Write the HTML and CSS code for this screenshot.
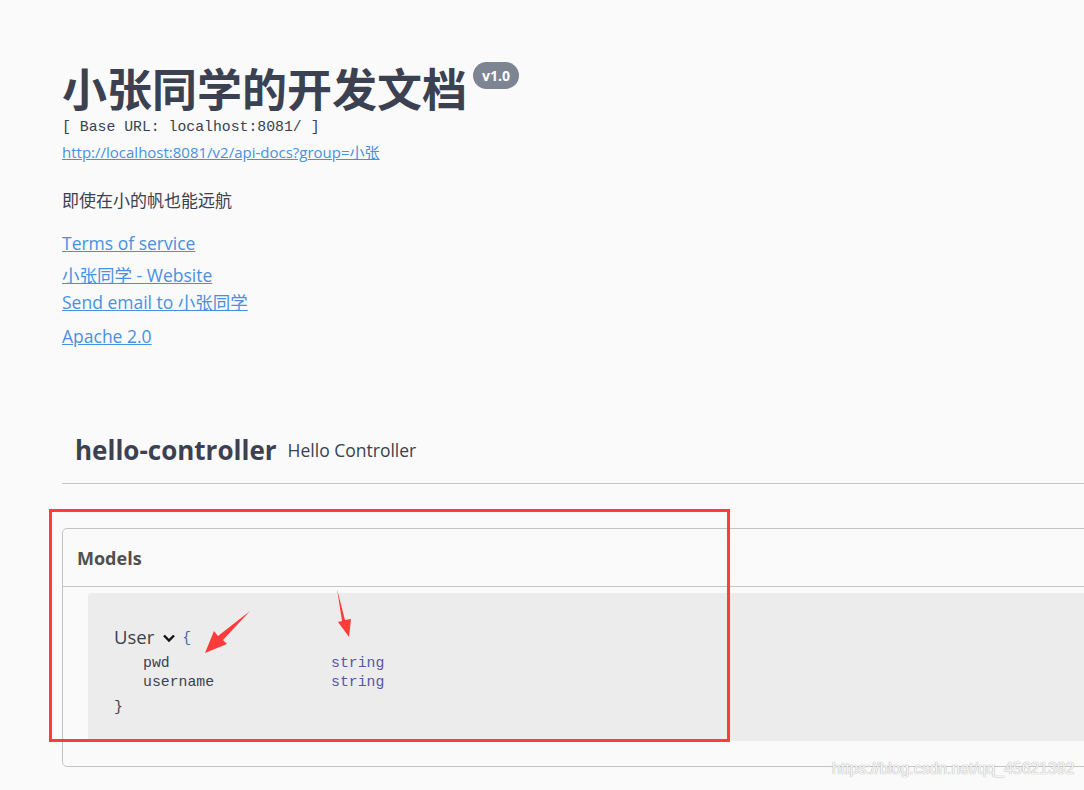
FILE: index.html
```html
<!DOCTYPE html>
<html lang="zh">
<head>
  <meta charset="UTF-8" />
  <title>小张同学的开发文档</title>
  <link rel="stylesheet" href="styles.css">
</head>
<body>
  <div class="wrapper">
    <div class="info">
      <div class="title-row">
        <h2 class="title">小张同学的开发文档</h2>
        <span class="version">v1.0</span>
      </div>
      <pre class="base-url">[ Base URL: localhost:8081/ ]</pre>
      <a class="url" href="#">http://localhost:8081/v2/api-docs?group=小张</a>
      <p class="desc">即使在小的帆也能远航</p>
      <a class="info-link terms" href="#">Terms of service</a>
      <a class="info-link website" href="#">小张同学 - Website</a>
      <a class="info-link email" href="#">Send email to 小张同学</a>
      <a class="info-link license" href="#">Apache 2.0</a>
    </div>

    <div class="tag-section">
      <h3 class="tag-header">
        <span class="tag-name">hello-controller</span>
        <span class="tag-desc">Hello Controller</span>
      </h3>
    </div>

    <section class="models">
      <h4 class="models-title">Models</h4>
      <div class="model-box">
        <div class="model-head">
          <span class="model-name">User</span>
          <svg class="chevron" width="14" height="10" viewBox="0 0 14 10"><path d="M2 2.5 L7 7.5 L12 2.5" fill="none" stroke="#111" stroke-width="2.4"/></svg>
          <span class="brace-open">{</span>
        </div>
        <div class="props">
          <div class="prop"><span class="prop-name">pwd</span><span class="prop-type">string</span></div>
          <div class="prop"><span class="prop-name">username</span><span class="prop-type">string</span></div>
        </div>
        <div class="brace-close">}</div>
      </div>
    </section>
  </div>

  <!-- annotations drawn on top of the screenshot -->
  <div class="mark-box"></div>
  <svg class="arrows" width="1084" height="790" viewBox="0 0 1084 790">
    <polygon points="250,611 223,640 227,644 205,653 214,631 218,636" fill="#ff3b3b"/>
    <polygon points="337,589 345,620 351,619 349,637 338,622 342,621" fill="#ff3b3b"/>
  </svg>
  <div class="watermark">https://blog.csdn.net/qq_45621392</div>
</body>
</html>
```

FILE: styles.css
```css
body {
  margin: 0;
  background-color: #fafafa;
  color: #3b4151;
  font-family: "Open Sans", "Noto Sans CJK SC", sans-serif;
  overflow: hidden;
  width: 1084px;
  height: 790px;
  position: relative;
}
.wrapper {
  width: 1300px;
  padding-left: 62px;
  box-sizing: border-box;
}
.info {
  display: flex;
  flex-direction: column;
  align-items: flex-start;
}
.title-row {
  display: flex;
  align-items: flex-start;
  margin-top: 62px;
}
.title {
  margin: 0;
  font-family: "Noto Sans CJK SC", sans-serif;
  font-size: 45px;
  line-height: 52px;
  font-weight: 700;
  color: #3b4151;
}
.version {
  margin-left: 6px;
  height: 27px;
  line-height: 27px;
  padding: 0 9px;
  border-radius: 14px;
  background-color: #7d8492;
  color: white;
  font-family: "Open Sans", sans-serif;
  font-weight: 700;
  font-size: 14px;
}
.base-url {
  margin: 3px 0 0;
  font-family: "Liberation Mono", monospace;
  font-size: 14.8px;
  line-height: 20px;
  color: #3b4151;
}
.url {
  margin-top: 5px;
  font-size: 15px;
  line-height: 20px;
  color: #4990e2;
}
.desc {
  margin: 27px 0 0;
  font-size: 17px;
  line-height: 24px;
}
.info-link {
  font-size: 17.5px;
  line-height: 24px;
  color: #4990e2;
}
.terms { margin-top: 18px; }
.website { margin-top: 8px; }
.email { margin-top: 3px; }
.license { margin-top: 10px; }

.tag-section {
  margin-top: 82px;
}
.tag-header {
  margin: 0;
  display: flex;
  align-items: center;
  height: 40px;
  padding: 0 0 13px 13px;
  border-bottom: 1px solid #c4c6ca;
}
.tag-name {
  font-size: 26px;
  font-weight: 700;
}
.tag-desc {
  margin-left: 11px;
  font-size: 17.5px;
  font-weight: 400;
}

.models {
  margin-top: 44px;
  border: 1px solid #c4c4c4;
  border-radius: 5px;
  padding-bottom: 25px;
}
.models-title {
  margin: 0;
  height: 57px;
  line-height: 58px;
  padding-left: 14px;
  font-size: 18px;
  font-weight: 700;
  color: #505050;
  border-bottom: 1px solid #c4c4c4;
}
.model-box {
  margin: 6px 0 0 25px;
  height: 148px;
  background-color: #ececec;
  border-radius: 4px;
  padding: 30px 0 0 26px;
  box-sizing: border-box;
}
.model-head {
  display: flex;
  align-items: center;
  height: 26px;
}
.model-name {
  font-size: 18.5px;
  color: #3b4151;
}
.chevron {
  margin: 3px 0 0 8px;
}
.brace-open {
  margin-left: 6px;
  font-family: "Liberation Mono", monospace;
  font-size: 14.8px;
  color: #4a6a9a;
  padding-top: 3px;
}
.props {
  margin-top: 5px;
}
.prop {
  display: flex;
  padding-left: 29px;
  height: 19px;
  line-height: 19px;
  font-family: "Liberation Mono", monospace;
  font-size: 14.8px;
}
.prop-name {
  width: 188px;
  color: #3b4151;
}
.prop-type {
  color: #55a;
}
.brace-close {
  margin-top: 5px;
  font-family: "Liberation Mono", monospace;
  font-size: 14.8px;
  line-height: 20px;
}

.mark-box {
  position: absolute;
  left: 49px;
  top: 509px;
  width: 675px;
  height: 227px;
  border: 3px solid #ff3b3b;
}
.arrows {
  position: absolute;
  left: 0;
  top: 0;
}
.watermark {
  position: absolute;
  left: 832px;
  top: 760px;
  font-family: "Liberation Sans", sans-serif;
  font-size: 15.8px;
  color: rgba(255, 255, 255, 0.9);
  text-shadow: 0 0 1px #b0b0b0, 0 0 1px #b0b0b0;
}
```
